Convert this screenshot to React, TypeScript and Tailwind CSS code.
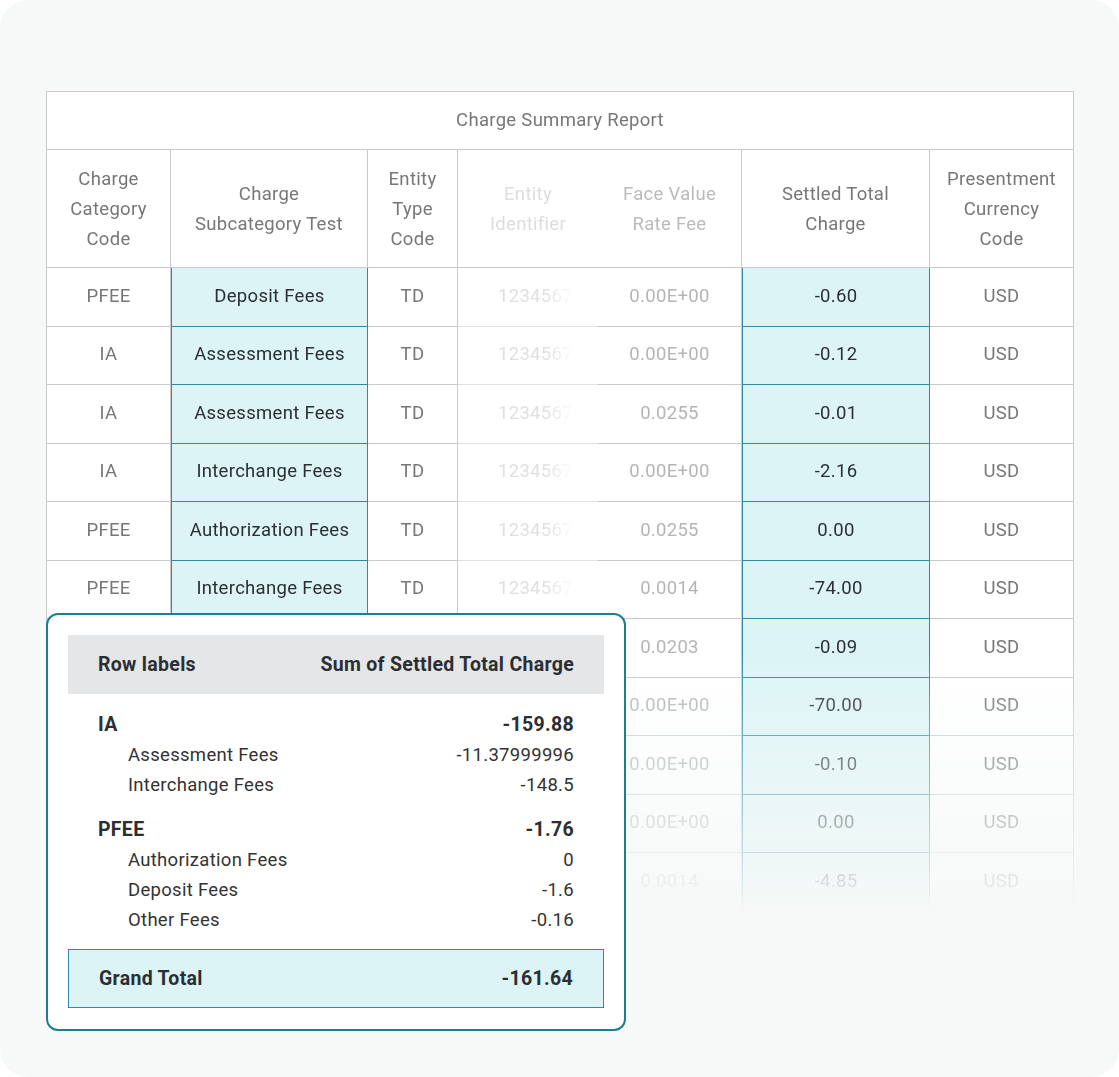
const cols = '124px 197px 90px 140px 144px 188px 144px';

const rows: [string, string, string, string, string][] = [
  ['PFEE', 'Deposit Fees', '0.00E+00', '-0.60', 'USD'],
  ['IA', 'Assessment Fees', '0.00E+00', '-0.12', 'USD'],
  ['IA', 'Assessment Fees', '0.0255', '-0.01', 'USD'],
  ['IA', 'Interchange Fees', '0.00E+00', '-2.16', 'USD'],
  ['PFEE', 'Authorization Fees', '0.0255', '0.00', 'USD'],
  ['PFEE', 'Interchange Fees', '0.0014', '-74.00', 'USD'],
  ['PFEE', 'Other Fees', '0.0203', '-0.09', 'USD'],
  ['IA', 'Interchange Fees', '0.00E+00', '-70.00', 'USD'],
  ['PFEE', 'Deposit Fees', '0.00E+00', '-0.10', 'USD'],
  ['IA', 'Assessment Fees', '0.00E+00', '0.00', 'USD'],
  ['PFEE', 'Other Fees', '0.0014', '-4.85', 'USD'],
];

const pivot = [
  { label: 'IA', total: '-159.88', items: [['Assessment Fees', '-11.37999996'], ['Interchange Fees', '-148.5']] },
  { label: 'PFEE', total: '-1.76', items: [['Authorization Fees', '0'], ['Deposit Fees', '-1.6'], ['Other Fees', '-0.16']] },
];

const cell = 'flex items-center justify-center text-center border-r border-b border-[#c9c9c9]';
const hl = 'bg-[#dcf4f6] border-[#2f8aa6] border-l border-r border-b text-[#2b2f33]';

export default function App() {
  return (
    <div className="w-[1119px] h-[1077px] bg-white" style={{ fontFamily: 'Roboto, "Open Sans", sans-serif' }}>
      <div className="relative w-full h-full rounded-[28px] bg-[#f6f9f8] pt-[91px] pl-[46px] overflow-hidden">
        <div className="w-[1028px] bg-white border-t border-l border-[#c9c9c9] text-[18.5px] tracking-[0.3px] text-[#777] [mask-image:linear-gradient(to_bottom,black_0,black_560px,rgba(0,0,0,0.15)_790px,transparent_820px)]">
          <div className="h-[58px] flex items-center justify-center border-r border-b border-[#c9c9c9]">Charge Summary Report</div>
          <div className="grid h-[118px] leading-[30px]" style={{ gridTemplateColumns: cols }}>
            <div className={cell}>Charge<br />Category<br />Code</div>
            <div className={cell}>Charge<br />Subcategory Test</div>
            <div className={cell}>Entity<br />Type<br />Code</div>
            <div className="flex items-center justify-center text-center border-b border-[#c9c9c9] text-[#ddd] overflow-hidden whitespace-nowrap">Entity<br />Identifier</div>
            <div className={cell + ' text-[#bbb]'}>Face Value<br />Rate Fee</div>
            <div className={cell}>Settled Total<br />Charge</div>
            <div className={cell}>Presentment<br />Currency<br />Code</div>
          </div>
          {rows.map((r, i) => (
            <div key={i} className="grid h-[58.5px]" style={{ gridTemplateColumns: cols }}>
              <div className={cell}>{r[0]}</div>
              <div className={'flex items-center justify-center ' + hl}>{r[1]}</div>
              <div className={cell}>TD</div>
              <div className="flex items-center justify-center border-b border-[#e2e2e2] text-[#e0e0e0] pl-4">
                <span className="w-[76px] overflow-hidden whitespace-nowrap [mask-image:linear-gradient(to_right,black_60%,transparent)]">1234567</span>
              </div>
              <div className={cell + ' text-[#b5b5b5]'}>{r[2]}</div>
              <div className={'flex items-center justify-center ' + hl}>{r[3]}</div>
              <div className={cell}>{r[4]}</div>
            </div>
          ))}
        </div>

        <div className="absolute left-[46px] top-[613px] w-[580px] h-[418px] bg-white border-2 border-[#1f7d93] rounded-[12px] px-[20px] pt-[20px] text-[18.5px] tracking-[0.3px] text-[#333]">
          <div className="h-[59px] bg-[#e5e6e7] flex items-center justify-between px-[30px] font-bold text-[19.5px] text-[#2b2f33]">
            <span>Row labels</span>
            <span>Sum of Settled Total Charge</span>
          </div>
          <div className="px-[30px] pt-[16px]">
            {pivot.map((g) => (
              <div key={g.label} className="mb-[15px] leading-[30px]">
                <div className="flex justify-between font-bold text-[19.5px] text-[#2b2f33]"><span>{g.label}</span><span>{g.total}</span></div>
                {g.items.map(([l, v]) => (
                  <div key={l} className="flex justify-between pl-[30px]"><span>{l}</span><span>{v}</span></div>
                ))}
              </div>
            ))}
          </div>
          <div className="absolute left-[20px] right-[20px] top-[334px] h-[59px] bg-[#dcf4f6] border border-[#2f8aa6] flex items-center justify-between px-[30px] font-bold text-[19.5px] text-[#2b2f33]">
            <span>Grand Total</span>
            <span>-161.64</span>
          </div>
        </div>
      </div>
    </div>
  );
}
